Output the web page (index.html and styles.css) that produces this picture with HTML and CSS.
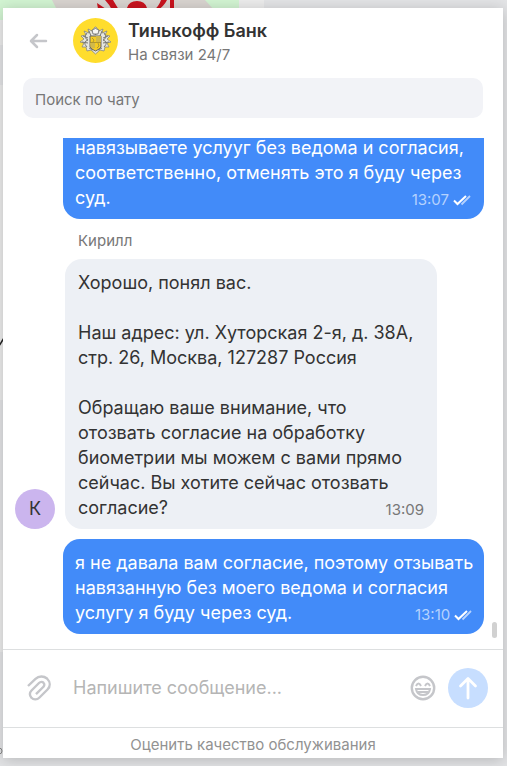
FILE: index.html
```html
<!DOCTYPE html>
<html lang="ru">
<head>
<meta charset="utf-8">
<meta name="viewport" content="width=device-width, initial-scale=1">
<title>Тинькофф Банк</title>
<link rel="stylesheet" href="styles.css">
</head>
<body>
<svg class="backdrop" width="507" height="766" viewBox="0 0 507 766" aria-hidden="true">
  <path fill="#e3e4e6" d="M0 0H507V766H0z"/>
  <path fill="#ececec" d="M0 20H4V45H0zM0 85H4V400H0zM239 0H264V10H239zM0 550H4V652H0z"/>
  <path fill="#d2f4d2" d="M0 0H239V20H0z"/>
  <path fill="#d9d4d0" d="M52 0H205L214 10H57z"/>
  <path fill="#c9131e" d="M97 3L106 9H98zM105 0H113L119 10H112Q109 4 105 0zM127 8Q129 1 137 1Q145 1 147 8zM161 0H167Q164 6 158 10H154Q159 6 161 0zM170 0H174V10H170z"/>
  <path fill="none" stroke="#222" stroke-width="1.5" d="M-1 346L4 338"/>
  <circle cx="-1" cy="751" r="3" fill="none" stroke="#888"/>
</svg>
<main class="chat">
  <header class="header">
    <button class="icon-button back" type="button" aria-label="Назад">
      <svg width="20" height="16" viewBox="0 0 20 16"><path d="M18 8H3.500M9 2L3 8L9 14" fill="none" stroke="currentColor" stroke-width="2.500" stroke-linecap="round" stroke-linejoin="round"/></svg>
    </button>
    <svg class="logo" width="45" height="45" viewBox="0 0 45 45" aria-hidden="true">
      <circle cx="22.500" cy="22.500" r="22.500" fill="#ffdd2d"/>
      <path d="M22 9L19 13L15 11L16 15L11 13L13 17L8 18L11 21L7 24L11 25L9 29L13 29L14 33L18 32L22.500 36L27 32L31 33L32 29L36 29L34 25L38 24L34 21L37 18L32 17L34 13L29 15L30 11L26 13L23 9z" fill="#e6e6df" stroke="#88887f" stroke-width=".8"/>
      <path d="M14 15Q10 20 15 22Q9 24 14 29M31 15Q35 20 30 22Q36 24 31 29M16 13L18 18M29 13L27 18M10 18L15 20M35 18L30 20M9 24L15 25M36 24L30 25M19 12L22.500 17L26 12M16 30L20 32M29 30L25 32" fill="none" stroke="#777772" stroke-width="1"/>
      <path d="M19 12Q22.500 9 26 12L25 16H20z" fill="#f7f7f4" stroke="#666" stroke-width=".8"/>
      <path d="M17 18H28V29Q27 31 22.500 33Q18 31 17 29z" fill="#f5cc24" stroke="#666"/>
      <path d="M23 18H28V24H23zM17 25H22V30H18z" fill="#d2b94a"/>
      <path d="M19 20L21 22L20 24M25 25L26 28L24 30M17 24.500H28" fill="none" stroke="#a08a30" stroke-width=".8"/>
    </svg>
    <div class="identity">
      <h1 class="title">Тинькофф Банк</h1>
      <p class="status">На связи 24/7</p>
    </div>
  </header>
  <div class="search">
    <input class="search-input" type="search" aria-label="Поиск по чату" placeholder="Поиск по чату">
  </div>
  <section class="history" aria-label="Сообщения">
    <article class="message outgoing continued">
      <p class="text">навязываете услууг без ведома и согласия,<br>соответственно, отменять это я буду через<br>суд.</p>
      <span class="meta"><time>13:07</time>
        <svg class="checks" width="19" height="11" viewBox="0 0 19 11" aria-hidden="true"><path d="M1 5.500L4.500 9L13 1" fill="none" stroke="#fff" stroke-width="2"/><path d="M8.500 9.500L17 1" fill="none" stroke="#b5d2fe" stroke-width="1.800"/></svg>
      </span>
    </article>
    <p class="sender">Кирилл</p>
    <div class="incoming-row">
      <span class="avatar">К</span>
      <article class="message incoming">
        <p class="text">Хорошо, понял вас.<br><br>Наш адрес: ул. Хуторская 2-я, д. 38А,<br>стр. 26, Москва, 127287 Россия<br><br>Обращаю ваше внимание, что<br>отозвать согласие на обработку<br>биометрии мы можем с вами прямо<br>сейчас. Вы хотите сейчас отозвать<br>согласие?</p>
        <span class="meta"><time>13:09</time></span>
      </article>
    </div>
    <article class="message outgoing">
      <p class="text">я не давала вам согласие, поэтому отзывать<br>навязанную без моего ведома и согласия<br>услугу я буду через суд.</p>
      <span class="meta"><time>13:10</time>
        <svg class="checks" width="19" height="11" viewBox="0 0 19 11" aria-hidden="true"><path d="M1 5.500L4.500 9L13 1" fill="none" stroke="#fff" stroke-width="2"/><path d="M8.500 9.500L17 1" fill="none" stroke="#b5d2fe" stroke-width="1.800"/></svg>
      </span>
    </article>
    <span class="scroll-thumb"></span>
  </section>
  <form class="composer">
    <button class="icon-button attach" type="button" aria-label="Прикрепить файл">
      <svg width="26" height="26" viewBox="0 0 26 26"><path d="M2 11L9.500 3.800C13 .5 18 1 21 3.500C24.500 7 24.500 11.500 21.500 14.500L13.500 22.500C11 25 7.500 25 5.500 22.800C3.200 20.500 3.500 17.500 5.500 15.500L13 8C14.500 6.500 16.500 6.500 17.500 7.800C18.800 9 18.500 10.800 17.200 12L10 19.200" fill="none" stroke="currentColor" stroke-width="2.400"/></svg>
    </button>
    <input class="composer-input" type="text" aria-label="Напишите сообщение" placeholder="Напишите сообщение...">
    <button class="icon-button emoji" type="button" aria-label="Эмодзи">
      <svg width="26" height="26" viewBox="0 0 26 26" fill="none" stroke="currentColor" stroke-width="2.400"><circle cx="13" cy="13" r="11.200"/><path d="M6 11Q8.500 6 11 11M15 11Q17.500 6 20 11M6 14H20Q19 20 13 20Q7 20 6 14zM8 17H18" stroke-width="2"/></svg>
    </button>
    <button class="send" type="submit" aria-label="Отправить">
      <svg width="20" height="24" viewBox="0 0 20 24"><path d="M10 22V3M2.500 10L10 2.500L17.500 10" fill="none" stroke="#fff" stroke-width="2.800" stroke-linecap="round" stroke-linejoin="round"/></svg>
    </button>
  </form>
  <button class="rate" type="button">Оценить качество обслуживания</button>
</main>
</body>
</html>
```
FILE: styles.css
```css
* {
  box-sizing: border-box;
}

body {
  margin: 0;
  height: 100vh;
  padding: 8px 4px 8px 3px;
  background: #e3e4e6;
  color: #333;
  font-family: Inter, "Liberation Sans", sans-serif;
  font-size: 18px;
  overflow: hidden;
}

button,
input {
  margin: 0;
  padding: 0;
  border: 0;
  background: none;
  font: inherit;
}

h1,
p {
  margin: 0;
}

svg {
  display: block;
}

.backdrop {
  position: absolute;
  top: 0;
  left: 0;
  z-index: -1;
}

.chat {
  display: flex;
  flex-direction: column;
  height: 100%;
  background: #fff;
  box-shadow: 0 2px 14px rgba(0, 0, 0, 0.2);
}

.header {
  display: flex;
  align-items: center;
  padding: 7px 20px 0 25px;
}

.icon-button {
  flex: none;
  color: #c5c6ca;
}

.logo {
  flex: none;
  margin: 0 10px 0 25px;
}

.identity {
  padding-top: 4px;
}

.title {
  font-size: 18px;
  font-weight: 600;
  line-height: 24px;
}

.status {
  color: #777;
  font-size: 15px;
  line-height: 23px;
}

.search {
  padding: 12px 20px 20px;
}

.search-input {
  display: block;
  width: 100%;
  height: 40px;
  padding: 2px 12px 0;
  border-radius: 10px;
  background: #f2f3f7;
  font-size: 15px;
  appearance: none;
}

.search-input::placeholder {
  color: #777;
  opacity: 1;
}

.history {
  position: relative;
  display: flex;
  flex: 1;
  flex-direction: column;
  justify-content: flex-end;
  min-height: 0;
  padding: 0 19px 15px 12px;
  overflow: hidden;
}

.message {
  display: flex;
  flex: none;
  align-items: flex-end;
  justify-content: space-between;
  padding: 11px 12px 9px;
  border-radius: 17px;
  line-height: 25px;
}

.text {
  flex: 1;
  white-space: nowrap;
}

.outgoing {
  margin-left: 48px;
  background: #428bf9;
  color: #fff;
}

.continued {
  padding-top: 40px;
}

.incoming {
  width: 372px;
  padding: 11px 13px 9px;
  background: #edf0f5;
}

.incoming-row {
  display: flex;
  align-items: flex-end;
  gap: 10px;
  margin-bottom: 10px;
}

.avatar {
  flex: none;
  width: 40px;
  border-radius: 50%;
  background: #cbb5ee;
  font-size: 18px;
  line-height: 40px;
  text-align: center;
}

.sender {
  padding: 12px 0 8px 63px;
  color: #777;
  font-size: 15px;
  line-height: 20px;
}

.meta {
  display: flex;
  flex: none;
  align-items: center;
  gap: 4px;
  width: 0;
  justify-content: flex-end;
  color: #777;
  font-size: 15px;
  line-height: 20px;
}

.outgoing .meta {
  color: #b5d2fe;
}

.checks {
  flex: none;
}

.scroll-thumb {
  position: absolute;
  right: 6px;
  bottom: 11px;
  width: 5px;
  height: 16px;
  border-radius: 3px;
  background: #d1d1d1;
}

.composer {
  display: flex;
  flex: none;
  align-items: center;
  height: 79px;
  padding: 0 15px 2px 23px;
  border: 1px solid #dddfe0;
  border-width: 1px 0;
}

.composer-input {
  flex: 1;
  min-width: 0;
  margin: 0 12px 0 21px;
  font-size: 18px;
}

.composer-input::placeholder {
  color: #b5b5b5;
  opacity: 1;
}

.send {
  display: flex;
  flex: none;
  align-items: center;
  justify-content: center;
  width: 40px;
  height: 40px;
  margin-left: 12px;
  border-radius: 50%;
  background: #c7deff;
}

.rate {
  flex: none;
  height: 30px;
  padding-top: 4px;
  color: #929292;
  font-size: 15px;
  line-height: 24px;
}
```
